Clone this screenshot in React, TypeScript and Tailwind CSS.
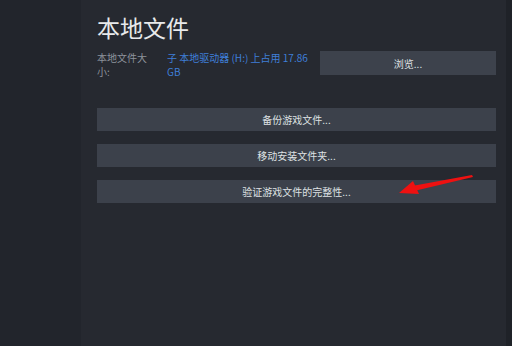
export default function App() {
  const font = { fontFamily: '"Noto Sans CJK SC", "Noto Sans", sans-serif' };
  return (
    <div className="relative w-[512px] h-[346px] flex bg-[#23262d] overflow-hidden" style={font}>
      <div className="w-[81px] h-full bg-[#22252c]" />
      <div className="w-[425px] h-full bg-[#262930] pl-[16px] pr-[10px] pt-[14px] flex flex-col">
        <div className="text-[23px] leading-[27px] text-[#e8e9eb]">本地文件</div>
        <div className="mt-[10px] flex items-start h-[26px]">
          <div className="w-[70px] text-[10px] leading-[14px] text-[#8d939c] whitespace-nowrap">
            本地文件大<br />小:
          </div>
          <div className="w-[153px] text-[10px] leading-[14px] text-[#3f7fd8] whitespace-nowrap">
            子 本地驱动器 (H:) 上占用 17.86<br />GB
          </div>
          <div className="flex-1 h-[24px] bg-[#3d424c] flex items-center justify-center text-[10px] text-[#dfe1e4]">
            浏览...
          </div>
        </div>
        <div className="mt-[31px] flex flex-col gap-[13px]">
          <div className="h-[23px] bg-[#3c414b] flex items-center justify-center text-[10px] text-[#dfe1e4]">备份游戏文件...</div>
          <div className="h-[23px] bg-[#3c414b] flex items-center justify-center text-[10px] text-[#dfe1e4]">移动安装文件夹...</div>
          <div className="h-[23px] bg-[#3c414b] flex items-center justify-center text-[10px] text-[#dfe1e4]">验证游戏文件的完整性...</div>
        </div>
      </div>
      <div className="flex-1 h-full bg-[#1f2228]" />
      <svg className="absolute left-0 top-0" width="512" height="346" viewBox="0 0 512 346">
        <polygon points="472,175 473,177 414,191 412,186" fill="#ee1111" />
        <polygon points="399,193 413,181 419,194" fill="#ee1111" />
      </svg>
    </div>
  );
}
